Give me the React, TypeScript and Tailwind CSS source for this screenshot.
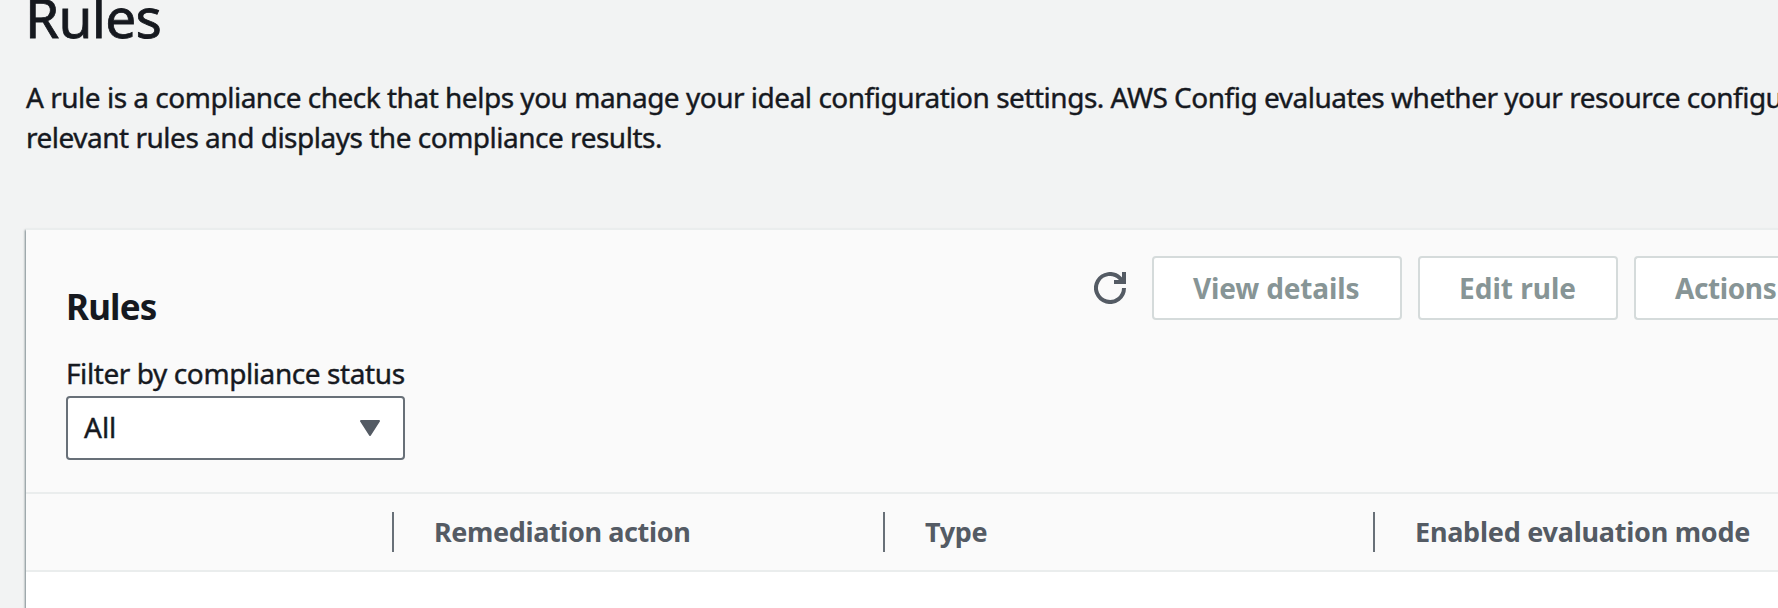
import type { ReactNode } from 'react';

function RefreshIcon() {
  return (
    <svg className="h-8 w-8" viewBox="0 0 32 32" fill="none" stroke="#545b64" strokeWidth="4">
      <path d="M30 16a14 14 0 1 1-4.1-9.9l3.1 3.6" />
      <path d="M30 0v10H20" />
    </svg>
  );
}

function CaretIcon() {
  return (
    <svg className="h-4 w-5" viewBox="0 0 20 16" fill="#545b64" stroke="#545b64" strokeWidth="2" strokeLinejoin="round">
      <path d="M1 1h18l-9 14z" />
    </svg>
  );
}

function Button({ className, children }: { className: string; children: ReactNode }) {
  return (
    <button
      disabled
      className={`flex h-16 shrink-0 items-center rounded border-2 border-[#d5dbdb] bg-white pl-[39px] text-[28px] leading-none font-bold whitespace-nowrap text-[#879596] ${className}`}
    >
      {children}
    </button>
  );
}

function Column({ className, children }: { className: string; children: ReactNode }) {
  return (
    <div className={`flex h-10 shrink-0 items-center border-[#687078] pl-10 text-[27px] leading-10 font-bold whitespace-nowrap text-[#545b64] ${className}`}>
      {children}
    </div>
  );
}

export default function App() {
  return (
    <div className="flex h-[608px] w-full flex-col overflow-hidden bg-[#f2f3f3] pl-[26px] font-['Noto_Sans',sans-serif] text-[#16191f]">
      <header className="flex h-[228px] shrink-0 flex-col">
        <h1 className="-mt-[23px] ml-[-1px] h-[100px] text-[55px] leading-[80px] tracking-[-0.7px] [-webkit-text-stroke:0.8px]">Rules</h1>
        <div className="text-[28px] leading-10 tracking-[-0.49px] whitespace-nowrap [-webkit-text-stroke:0.4px]">
          <p>A rule is a compliance check that helps you manage your ideal configuration settings. AWS Config evaluates whether your resource configu</p>
          <p>relevant rules and displays the compliance results.</p>
        </div>
      </header>
      <main className="flex grow flex-col border-t-2 border-[#eaeded] bg-white shadow-[-1px_2px_2px_0_rgba(0,28,36,0.5)]">
        <section className="flex h-[264px] shrink-0 justify-between border-b-2 border-[#eaeded] bg-[#fafafa] pt-[26px] pl-10">
          <div className="flex w-[339px] flex-col">
            <h2 className="mt-[31px] h-[66px] text-[35px] leading-10 font-bold tracking-[-0.8px]">Rules</h2>
            <label className="h-[43px] text-[28px] leading-10 tracking-[-0.41px] whitespace-nowrap [-webkit-text-stroke:0.4px]">Filter by compliance status</label>
            <div className="flex h-16 items-center justify-between rounded border-2 border-[#687078] bg-white pr-[23px] pl-4 text-[28px] leading-none">
              <span className="pb-0.5 [-webkit-text-stroke:0.4px]">All</span>
              <CaretIcon />
            </div>
          </div>
          <div className="flex h-16 items-center gap-4">
            <div className="mr-2.5 flex">
              <RefreshIcon />
            </div>
            <Button className="w-[250px] tracking-[-0.15px]">View details</Button>
            <Button className="w-[200px]">Edit rule</Button>
            <Button className="w-36 rounded-r-none border-r-0 tracking-[-0.4px]">Actions</Button>
          </div>
        </section>
        <section className="flex h-[78px] shrink-0 items-center border-b-2 border-[#eaeded] bg-[#fafafa]">
          <Column className="w-[368px] border-r-2">{''}</Column>
          <Column className="w-[491px] border-r-2 tracking-[-0.38px]">Remediation action</Column>
          <Column className="w-[490px] border-r-2 tracking-[-0.3px]">Type</Column>
          <Column className="tracking-[-0.24px]">Enabled evaluation mode</Column>
        </section>
      </main>
    </div>
  );
}
